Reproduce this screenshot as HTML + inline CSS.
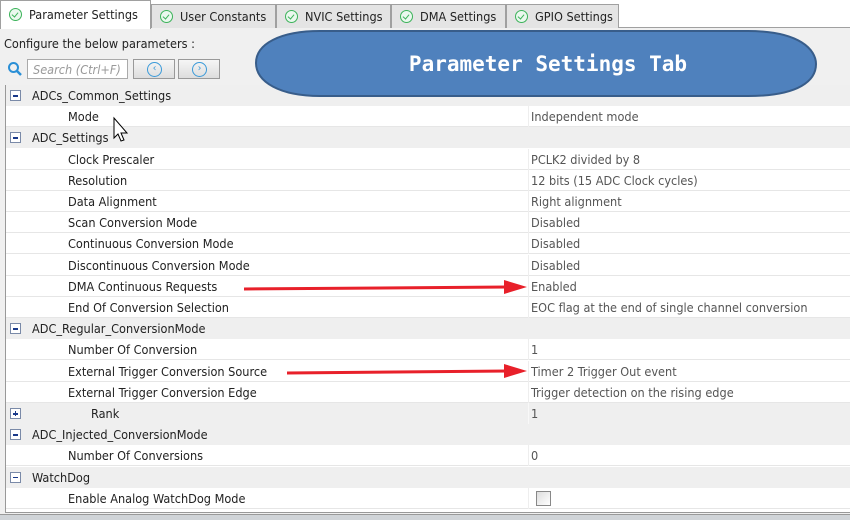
<!DOCTYPE html>
<html><head><meta charset="utf-8"><style>
*{margin:0;padding:0;box-sizing:border-box}
body{width:850px;height:520px;position:relative;overflow:hidden;background:#f0f0f0;font-family:"DejaVu Sans Condensed","Liberation Sans",sans-serif;font-size:12.6px;color:#222}
.topbar{position:absolute;left:0;top:0;width:850px;height:28px;background:#fff;border-bottom:1px solid #a0a0a0}
.tab{position:absolute;top:4px;height:24px;background:#e4e4e4;border:1px solid #a0a0a0;border-bottom:none;padding:4px 0 0 8px;white-space:nowrap}
.tab.act{top:0;height:29px;background:#fff;padding-top:6px;z-index:2}
.ck{display:inline-block;width:13px;height:13px;border:1.5px solid #3cb35a;border-radius:50%;vertical-align:-2px;margin-right:7px;position:relative;background:#eaf8ee}
.ck:after{content:"";position:absolute;left:3px;top:1.5px;width:3px;height:5px;border:solid #3cb35a;border-width:0 1.5px 1.5px 0;transform:rotate(40deg)}
.cfg{position:absolute;left:4px;top:36px}
.srch{position:absolute;left:27px;top:59px;width:101px;height:20px;background:#fff;border:1px solid #aaa;color:#999;font-style:italic;padding:2px 0 0 5px}
.btn{position:absolute;top:59px;width:42px;height:20px;border:1px solid #999;background:linear-gradient(#f6f6f6,#ddd)}
.btn i{position:absolute;left:13px;top:2px;width:15px;height:15px;border:1.5px solid #3a9ad9;border-radius:50%;color:#3a9ad9;font-style:normal;font-size:10px;line-height:12px;text-align:center}
.tbl{position:absolute;left:5px;top:85px;width:845px;height:428px;background:#fff;border-left:1px solid #999;border-bottom:1px solid #999}
.r{position:absolute;left:0;width:845px;height:21px;border-bottom:1px solid #e6e6e6;background:#fff}
.r.g{background:#efefef;border-bottom:none}
.r span{position:absolute;top:3px;white-space:nowrap}
.r .l{left:62px}
.r.g .l{left:26px}
.r .v{left:525px;color:#555}
.r .dv{position:absolute;left:522px;top:0;width:1px;height:21px;background:#eee}
.ex{position:absolute;left:4px;top:5px;width:11px;height:11px;border:1px solid #7a8aa8;background:#fff}
.ex:before{content:"";position:absolute;left:2px;top:4px;width:5px;height:1.5px;background:#1a3a8a}
.ex.p:after{content:"";position:absolute;left:3.8px;top:2px;width:1.5px;height:5px;background:#1a3a8a}
.bot{position:absolute;left:0;top:514px;width:850px;height:6px;background:#d0d4d8;border-top:1px solid #999}
</style></head><body>
<div class="topbar"></div>
<div class="tab act" style="left:0;width:151px"><span class="ck"></span>Parameter Settings</div>
<div class="tab" style="left:151px;width:125px"><span class="ck"></span>User Constants</div>
<div class="tab" style="left:276px;width:115px"><span class="ck"></span>NVIC Settings</div>
<div class="tab" style="left:391px;width:115px"><span class="ck"></span>DMA Settings</div>
<div class="tab" style="left:506px;width:113px"><span class="ck"></span>GPIO Settings</div>
<div class="cfg">Configure the below parameters :</div>
<svg style="position:absolute;left:7px;top:61px" width="16" height="16"><circle cx="6.5" cy="6.5" r="4.5" fill="none" stroke="#2a8fd6" stroke-width="2"/><path d="M10 10 L14 14" stroke="#2a8fd6" stroke-width="2.5"/></svg>
<div class="srch">Search (Ctrl+F)</div>
<div class="btn" style="left:133px"><i>‹</i></div>
<div class="btn" style="left:178px"><i>›</i></div>
<div class="tbl">
<div class="r g" style="top:0"><div class="ex"></div><span class="l">ADCs_Common_Settings</span></div>
<div class="r" style="top:21.2px"><span class="l">Mode</span><div class="dv"></div><span class="v">Independent mode</span></div>
<div class="r g" style="top:42.4px"><div class="ex"></div><span class="l">ADC_Settings</span></div>
<div class="r" style="top:63.6px"><span class="l">Clock Prescaler</span><div class="dv"></div><span class="v">PCLK2 divided by 8</span></div>
<div class="r" style="top:84.8px"><span class="l">Resolution</span><div class="dv"></div><span class="v">12 bits (15 ADC Clock cycles)</span></div>
<div class="r" style="top:106px"><span class="l">Data Alignment</span><div class="dv"></div><span class="v">Right alignment</span></div>
<div class="r" style="top:127.2px"><span class="l">Scan Conversion Mode</span><div class="dv"></div><span class="v">Disabled</span></div>
<div class="r" style="top:148.4px"><span class="l">Continuous Conversion Mode</span><div class="dv"></div><span class="v">Disabled</span></div>
<div class="r" style="top:169.6px"><span class="l">Discontinuous Conversion Mode</span><div class="dv"></div><span class="v">Disabled</span></div>
<div class="r" style="top:190.8px"><span class="l">DMA Continuous Requests</span><div class="dv"></div><span class="v">Enabled</span></div>
<div class="r" style="top:212px"><span class="l">End Of Conversion Selection</span><div class="dv"></div><span class="v">EOC flag at the end of single channel conversion</span></div>
<div class="r g" style="top:233.2px"><div class="ex"></div><span class="l">ADC_Regular_ConversionMode</span></div>
<div class="r" style="top:254.4px"><span class="l">Number Of Conversion</span><div class="dv"></div><span class="v">1</span></div>
<div class="r" style="top:275.6px"><span class="l">External Trigger Conversion Source</span><div class="dv"></div><span class="v">Timer 2 Trigger Out event</span></div>
<div class="r" style="top:296.8px"><span class="l">External Trigger Conversion Edge</span><div class="dv"></div><span class="v">Trigger detection on the rising edge</span></div>
<div class="r g" style="top:318px"><div class="ex p"></div><span class="l" style="left:85px">Rank</span><div class="dv" style="background:#f8f8f8"></div><span class="v">1</span></div>
<div class="r g" style="top:339.2px"><div class="ex"></div><span class="l">ADC_Injected_ConversionMode</span></div>
<div class="r" style="top:360.4px"><span class="l">Number Of Conversions</span><div class="dv"></div><span class="v">0</span></div>
<div class="r g" style="top:381.6px"><div class="ex"></div><span class="l">WatchDog</span></div>
<div class="r" style="top:402.8px"><span class="l">Enable Analog WatchDog Mode</span><div class="dv"></div><div style="position:absolute;left:530px;top:3px;width:15px;height:15px;border:1px solid #888;background:linear-gradient(135deg,#ddd,#fff)"></div></div>
</div>
<div class="bot"></div>
<svg style="position:absolute;left:0;top:0" width="850" height="520">
<path d="M320 31 L748 31 C800 31 816 50 816 64 C816 80 800 96 748 96 L320 96 C280 96 256 82 256 63 C256 44 280 31 320 31 Z" fill="#4f81bd" stroke="#385d8a" stroke-width="2"/>
<text x="548" y="71" text-anchor="middle" fill="#fff" font-family="DejaVu Sans Mono,Liberation Mono,monospace" font-weight="bold" font-size="21">Parameter Settings Tab</text>
<path d="M114 118 L114 138 L118 134 L121 141 L124 140 L121 133 L127 133 Z" fill="#fff" stroke="#000" stroke-width="1"/>
<path d="M244 289 L508 287" stroke="#e8202a" stroke-width="3"/><path d="M504 280 L527 287 L504 294 Z" fill="#e8202a"/>
<path d="M287 373 L508 371" stroke="#e8202a" stroke-width="3"/><path d="M504 364 L527 371 L504 378 Z" fill="#e8202a"/>
</svg>
</body></html>
